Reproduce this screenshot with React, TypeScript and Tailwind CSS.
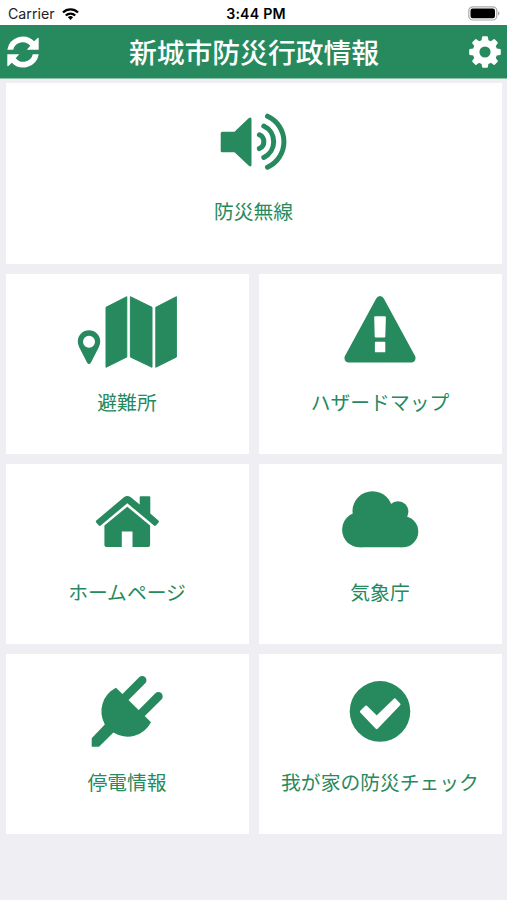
import type { ReactNode } from 'react';

interface MenuCardProps {
  label: string;
  icon: ReactNode;
  wide?: boolean;
}

function SpeakerIcon() {
  return (
    <svg viewBox="194 83 120 100" className="w-[120px] h-[100px]" fill="currentColor">
      <path d="M222.2 131.7H234.5L248.6 118.3Q251.5 116.2 251.5 119.5V164.5Q251.5 167.8 248.6 165.6L234.5 152.2H222.2Q220.7 152.2 220.7 150.7V133.2Q220.7 131.7 222.2 131.7Z" />
      <g fill="none" stroke="currentColor" strokeWidth="5" strokeLinecap="round">
        <path d="M259.4 134.8A7.6 7.6 0 0 1 259.4 148.6" />
        <path d="M263.8 126A17.4 17.4 0 0 1 263.8 157.4" />
        <path d="M267.5 116.2A28 28 0 0 1 267.5 167.2" />
      </g>
    </svg>
  );
}

function MapIcon() {
  return (
    <svg viewBox="68 274 120 100" className="w-[120px] h-[100px]" fill="currentColor">
      <g stroke="currentColor" strokeWidth="1" strokeLinejoin="round">
        <path d="M106 307.3L126.8 296.7V357L106 367.3Z" />
        <path d="M130.4 296.7L152 307.3V367.3L130.4 357Z" />
        <path d="M155.8 307.3L176.4 296.7V357L155.8 367.3Z" />
      </g>
      <path
        fillRule="evenodd"
        d="M89 330.3A11.2 11.2 0 0 1 100.2 341.5Q100.2 344.5 98.8 347.2L91 362.5Q89 365.5 87 362.5L79.2 347.2Q77.8 344.5 77.8 341.5A11.2 11.2 0 0 1 89 330.3ZM89 335.7A6 6 0 1 0 89 347.7A6 6 0 1 0 89 335.7Z"
      />
    </svg>
  );
}

function WarningIcon() {
  return (
    <svg viewBox="321 274 120 100" className="w-[120px] h-[100px]" fill="currentColor">
      <path
        fillRule="evenodd"
        d="M376.2 298.6Q377.5 296 380 296Q382.5 296 383.8 298.6L415.2 356.3Q416.3 358.5 415 360.4Q413.8 362.4 411.6 362.4H348.4Q346.2 362.4 345 360.4Q343.7 358.5 344.8 356.3ZM375.2 316.3Q374.2 316.3 374.2 317.3L374.7 336.5Q374.7 337.4 375.7 337.4H384.4Q385.3 337.4 385.3 336.5L385.9 317.3Q385.9 316.3 384.9 316.3ZM375.7 341.8Q374.9 341.8 374.9 342.6V351.4Q374.9 352.3 375.7 352.3H384.5Q385.3 352.3 385.3 351.4V342.6Q385.3 341.8 384.5 341.8Z"
      />
    </svg>
  );
}

function HouseIcon() {
  return (
    <svg viewBox="68 464 120 100" className="w-[120px] h-[100px]" fill="currentColor">
      <path d="M124.2 497Q127.3 494.8 130.5 497L139.7 504.5V497.2Q139.7 496.2 140.7 496.2H149.3Q150.3 496.2 150.3 497.2V513.4L158.4 520.5Q159.4 521.4 158.5 522.4L155.9 525.5Q155 526.4 154 525.6L127.3 503.2L100.7 525.6Q99.7 526.4 98.8 525.5L96.2 522.4Q95.3 521.4 96.3 520.5Z" />
      <path d="M127.3 506.7L150.1 525.6V545Q150.1 547 148.1 547H132.5V531.5H121.8V547H106.4Q104.4 547 104.4 545V525.6Z" />
    </svg>
  );
}

function CloudIcon() {
  return (
    <svg viewBox="321 464 120 100" className="w-[120px] h-[100px]" fill="currentColor">
      <circle cx="372.5" cy="511.2" r="20" />
      <circle cx="398" cy="511.7" r="10.4" />
      <circle cx="359.7" cy="529.7" r="17.6" />
      <circle cx="402.6" cy="531.6" r="15.7" />
      <path d="M359.7 547.3H402.6V511H359.7Z" />
    </svg>
  );
}

function PlugIcon() {
  return (
    <svg viewBox="68 654 120 100" className="w-[120px] h-[100px]" fill="currentColor">
      <path d="M116 687.7L151 722.3A26.5 26.5 0 0 1 113.4 732.6L99 746.8H91.7V738.3L104.8 724.4A26.5 26.5 0 0 1 116 687.7Z" />
      <path d="M142.2 680.2L124 698.5M158.4 696.4L140.5 714.3" stroke="currentColor" strokeWidth="8.6" strokeLinecap="round" />
    </svg>
  );
}

function CheckIcon() {
  return (
    <svg viewBox="321 654 120 100" className="w-[120px] h-[100px]" fill="currentColor">
      <circle cx="380" cy="711.4" r="30.3" />
      <path
        d="M366 706.8L376.7 717.2L394.8 699.6L399.2 704.4L376.7 727.8L361.2 711.7Z"
        fill="#fff"
        stroke="#fff"
        strokeWidth="2.6"
        strokeLinejoin="round"
      />
    </svg>
  );
}

function RefreshIcon() {
  return (
    <svg viewBox="0 0 32 32" className="w-8 h-8" fill="currentColor">
      <path d="M0.3 13.8A15.8 15.8 0 0 1 27.2 5.3L30.6 2.1Q31.7 1.4 31.7 2.8V13.8H19.8L23.3 9.8A9.8 9.8 0 0 0 6.2 13.8Z" />
      <path
        transform="rotate(180 16 16)"
        d="M0.3 13.8A15.8 15.8 0 0 1 27.2 5.3L30.6 2.1Q31.7 1.4 31.7 2.8V13.8H19.8L23.3 9.8A9.8 9.8 0 0 0 6.2 13.8Z"
      />
    </svg>
  );
}

const gearTeeth = [0, 45, 90, 135, 180, 225, 270, 315];

function GearIcon() {
  return (
    <svg viewBox="0 0 32 32" className="w-8 h-8" fill="currentColor">
      <circle cx="16" cy="16" r="8.9" fill="none" stroke="currentColor" strokeWidth="6.6" />
      {gearTeeth.map((angle) => (
        <path key={angle} d="M12.3 6L13.1 0.9Q13.2 0.2 13.9 0.2H18.1Q18.8 0.2 18.9 0.9L19.7 6Z" transform={`rotate(${angle} 16 16)`} />
      ))}
    </svg>
  );
}

const menuItems: MenuCardProps[] = [
  { label: '防災無線', icon: <SpeakerIcon />, wide: true },
  { label: '避難所', icon: <MapIcon /> },
  { label: 'ハザードマップ', icon: <WarningIcon /> },
  { label: 'ホームページ', icon: <HouseIcon /> },
  { label: '気象庁', icon: <CloudIcon /> },
  { label: '停電情報', icon: <PlugIcon /> },
  { label: '我が家の防災チェック', icon: <CheckIcon /> },
];

function MenuCard({ label, icon, wide }: MenuCardProps) {
  return (
    <button className={`flex flex-col items-center bg-white text-[#278a5e] ${wide ? 'col-span-2 h-[181px]' : 'h-[180px]'}`}>
      {icon}
      <span className="mt-[13px] pr-px text-[19.8px] leading-[30px] font-normal whitespace-nowrap">{label}</span>
    </button>
  );
}

function StatusBar() {
  return (
    <div className="grid grid-cols-3 items-center h-[25px] pl-2 pr-[5px] bg-white text-[14.2px] leading-none text-black font-['Inter','Liberation_Sans',sans-serif]">
      <div className="flex items-center gap-[7px] pt-[3px]">
        <span className="text-[#222]">Carrier</span>
        <svg viewBox="0 0 17 12" className="w-[17px] h-3" fill="none" stroke="currentColor" strokeWidth="2.3">
          <path d="M1 4.5A10.6 10.6 0 0 1 16 4.5" />
          <path d="M3.8 7.5A6.6 6.6 0 0 1 13.2 7.5" />
          <path d="M8.5 12L5.9 9.3A3.8 3.8 0 0 1 11.1 9.3Z" fill="currentColor" stroke="none" />
        </svg>
      </div>
      <span className="pt-[3px] pl-0.5 text-center font-semibold tracking-[0.2px]">3:44 PM</span>
      <svg viewBox="0 0 32 15" className="w-8 h-[15px] justify-self-end mt-px mr-0.5">
        <rect x="0.8" y="0.8" width="28" height="13.2" rx="4" fill="#fff" stroke="#aaa" strokeWidth="1.2" />
        <rect x="2.5" y="2.5" width="24.5" height="9.8" rx="2.2" fill="#000" />
        <path d="M30 5.2Q31.5 6 31.5 7.4T30 9.6Z" fill="#aaa" />
      </svg>
    </div>
  );
}

export default function App() {
  return (
    <div className="min-h-screen bg-[#eeeef3] font-['Noto_Sans_CJK_JP',sans-serif]">
      <StatusBar />
      <header className="flex items-center justify-between h-[54px] pl-[7px] pr-[6px] bg-[#278a5e] text-white border-b border-[#8dbfaa]">
        <button aria-label="更新">
          <RefreshIcon />
        </button>
        <h1 className="text-[27.8px] leading-none font-medium">新城市防災行政情報</h1>
        <button aria-label="設定">
          <GearIcon />
        </button>
      </header>
      <main className="grid grid-cols-2 gap-[10px] pt-1 pl-[6px] pr-[5px]">
        {menuItems.map((item) => (
          <MenuCard key={item.label} {...item} />
        ))}
      </main>
    </div>
  );
}
